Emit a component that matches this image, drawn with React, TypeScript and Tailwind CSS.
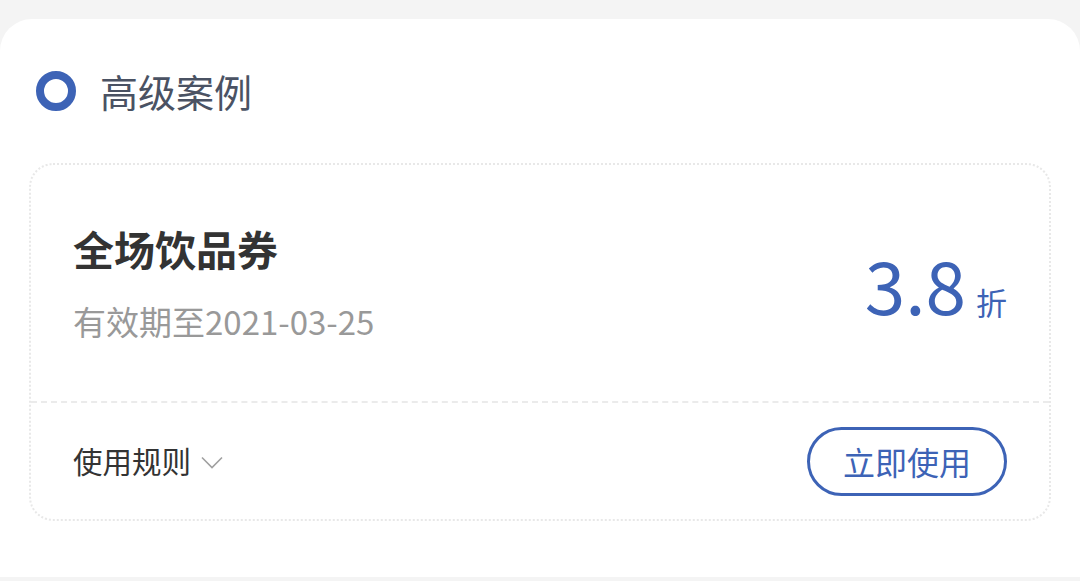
export default function App() {
  return (
    <div
      className="h-[581px] w-[1080px] bg-[#f4f4f4] pt-[19px]"
      style={{ fontFamily: '"Noto Sans CJK SC", "Noto Sans", sans-serif' }}
    >
      <div className="h-[558px] rounded-t-[32px] bg-white px-[29px]">
        {/* Header */}
        <div className="flex h-[144px] items-center gap-[24px] pl-[7px] pb-[1px]">
          <span className="box-border h-[40px] w-[40px] rounded-full border-[8px] border-[#3d63b6]" />
          <span className="text-[38px] leading-none text-[#4a5263]">高级案例</span>
        </div>

        {/* Coupon */}
        <div className="rounded-[24px] border-2 border-dotted border-[#e8e8e8]">
          <div className="flex h-[238px] items-center justify-between border-b-2 border-dashed border-[#ebebeb] pl-[42px] pr-[42px]">
            <div className="flex flex-col gap-[36px]">
              <span className="text-[41px] font-bold leading-none text-[#333333]">全场饮品券</span>
              <span className="text-[33px] leading-none text-[#999999]">有效期至2021-03-25</span>
            </div>
            <div className="flex items-baseline gap-[10px] text-[#3d63b6]">
              <span className="text-[73px] leading-none">3.8</span>
              <span className="text-[31px] leading-none">折</span>
            </div>
          </div>
          <div className="flex h-[116px] items-center justify-between pl-[42px] pr-[42px]">
            <div className="flex items-center gap-[10px]">
              <span className="text-[29.5px] leading-none text-[#333333]">使用规则</span>
              <svg width="22" height="13" viewBox="0 0 22 13" fill="none" className="mt-[2px]">
                <path d="M1 1.5 L11 11.5 L21 1.5" stroke="#a0a0a0" strokeWidth="1.6" />
              </svg>
            </div>
            <button className="flex h-[69px] w-[200px] items-center justify-center rounded-full border-[3px] border-[#3d63b6] text-[32px] leading-none text-[#3d63b6]">
              立即使用
            </button>
          </div>
        </div>
      </div>
    </div>
  );
}
